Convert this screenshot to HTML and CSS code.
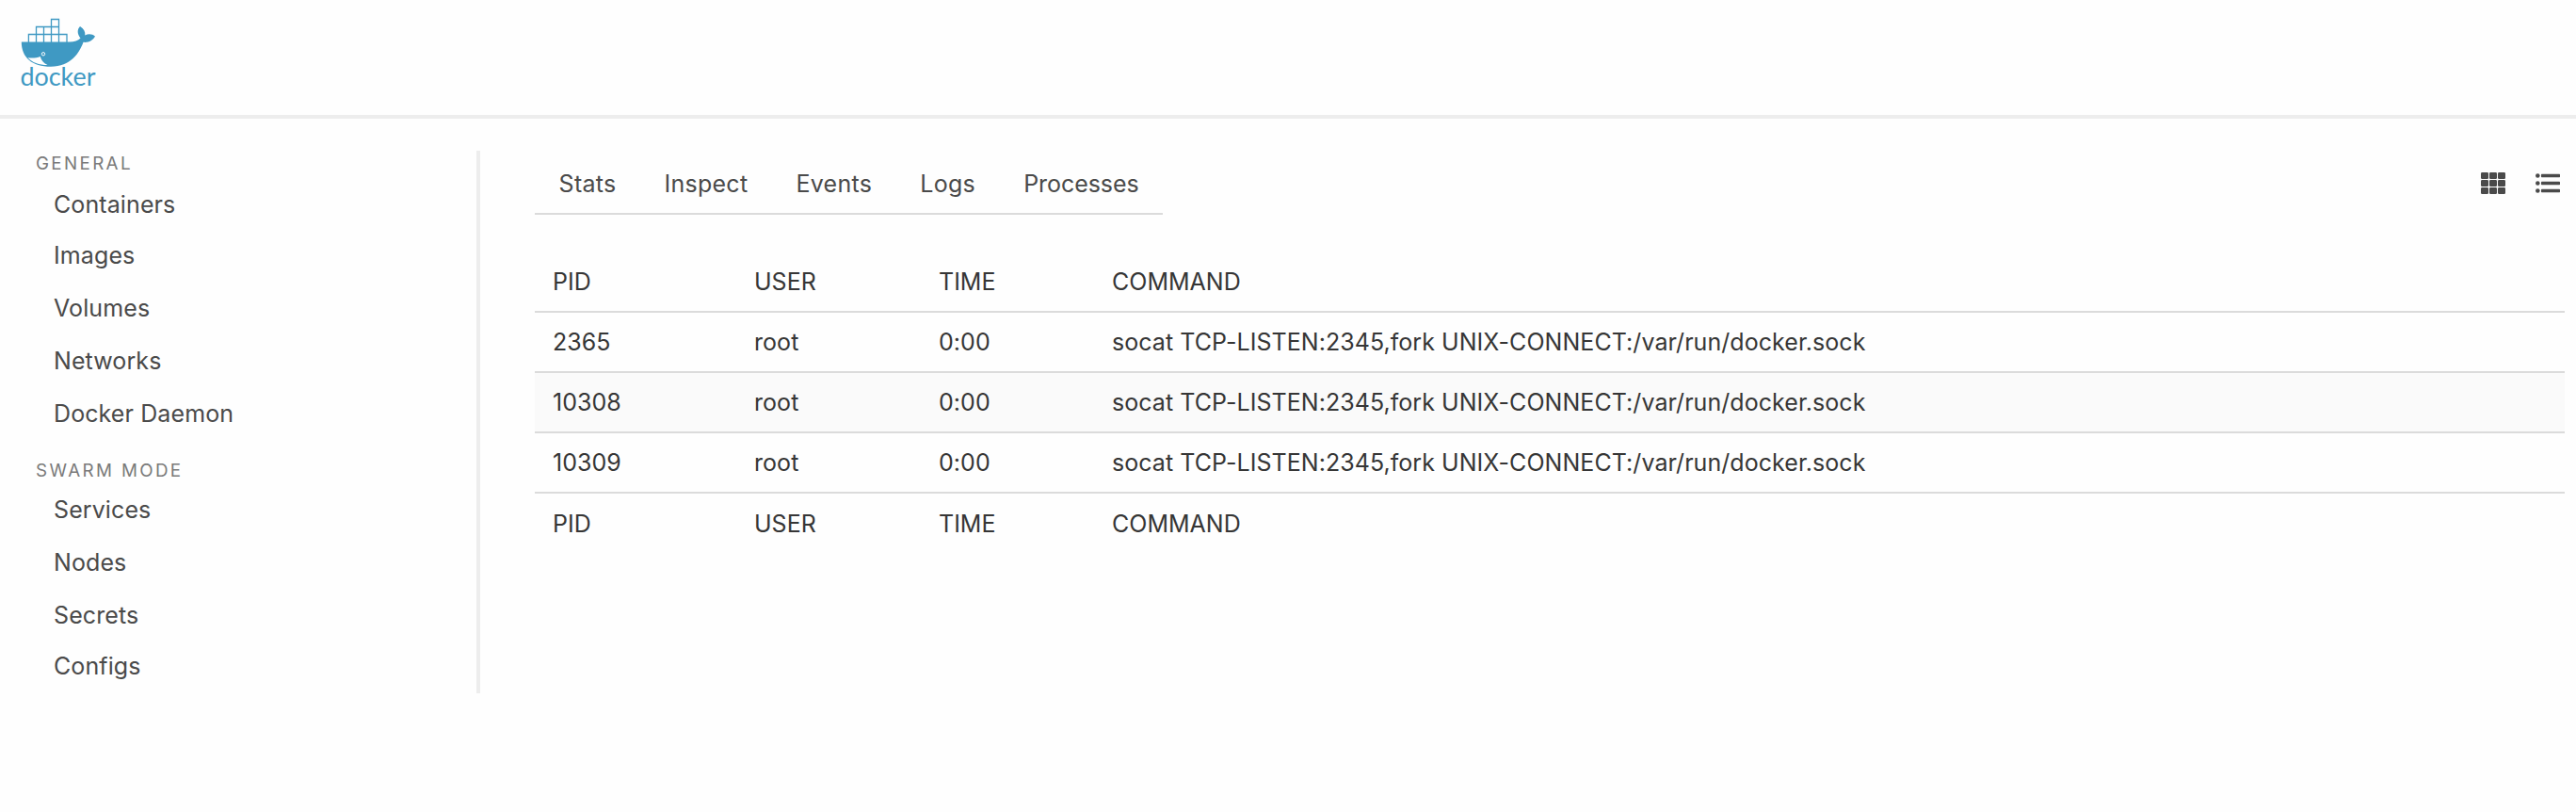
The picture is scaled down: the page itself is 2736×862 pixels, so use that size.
FILE: index.html
```
<!DOCTYPE html>
<html lang="en">
<head>
<meta charset="utf-8">
<title>Docker - Processes</title>
<link rel="stylesheet" href="styles.css">
</head>
<body>
<header class="navbar">
  <svg class="logo" viewBox="0 0 84 76" role="img" aria-label="docker">
    <path class="logo-boxes" d="M8.400 26V17.500H49V26M16.500 26V9.500H40.500V26M32.500 26V1.500H40.500V17.500M16.500 17.500H40.500M24.500 9.500V26"/>
    <path class="logo-fill" d="M.8 25.500H52C57 25.500 61 24 63.500 21.500C60.200 17.500 59.500 12.500 63 9C67 11.500 68.800 14.500 68.300 18.500C72 16.500 76 17 79 19.500C76.500 24 72 26.500 66.500 25.800C62.500 37 53 51.800 32 51.800C12 51.800 .8 42 .8 25.500Z"/>
    <path class="logo-belly" d="M7.500 42.200C12 43 17 42.500 20.800 41C21.500 44.500 24 48 28.500 50C19.500 50 12 47.300 7.500 42.200Z"/>
    <circle class="logo-eye" cx="24" cy="38.300" r="1.700"/>
    <text class="logo-text" x="-.5" y="71.500" textLength="80" lengthAdjust="spacingAndGlyphs">docker</text>
  </svg>
</header>
<div class="layout">
  <aside class="menu">
    <p class="menu-label">General</p>
    <ul class="menu-list">
      <li class="tight"><a>Containers</a></li>
      <li><a>Images</a></li>
      <li><a>Volumes</a></li>
      <li><a>Networks</a></li>
      <li><a>Docker Daemon</a></li>
    </ul>
    <p class="menu-label swarm-label">Swarm Mode</p>
    <ul class="menu-list">
      <li><a>Services</a></li>
      <li><a>Nodes</a></li>
      <li class="tight"><a>Secrets</a></li>
      <li><a>Configs</a></li>
    </ul>
  </aside>
  <main class="content">
    <div class="toolbar">
      <nav class="tabs"><a>Stats</a><a>Inspect</a><a>Events</a><a>Logs</a><a>Processes</a></nav>
      <div class="view-icons">
        <svg class="icon" viewBox="0 0 26 24" aria-label="Grid view">
          <rect x="0" y="0" width="8" height="7" rx="1.200"/><rect x="9" y="0" width="8" height="7" rx="1.200"/><rect x="18" y="0" width="8" height="7" rx="1.200"/>
          <rect x="0" y="8" width="8" height="7" rx="1.200"/><rect x="9" y="8" width="8" height="7" rx="1.200"/><rect x="18" y="8" width="8" height="7" rx="1.200"/>
          <rect x="0" y="16" width="8" height="7" rx="1.200"/><rect x="9" y="16" width="8" height="7" rx="1.200"/><rect x="18" y="16" width="8" height="7" rx="1.200"/>
        </svg>
        <svg class="icon" viewBox="0 0 26 24" aria-label="List view">
          <circle cx="2.300" cy="3.500" r="2.300"/><circle cx="2.300" cy="11.500" r="2.300"/><circle cx="2.300" cy="19.500" r="2.300"/>
          <rect x="6" y="1.700" width="20" height="3.500" rx=".6"/><rect x="6" y="9.700" width="20" height="3.500" rx=".6"/><rect x="6" y="17.700" width="20" height="3.500" rx=".6"/>
        </svg>
      </div>
    </div>
    <table class="table">
      <colgroup><col class="col-pid"><col class="col-user"><col class="col-time"><col></colgroup>
      <thead><tr><th>PID</th><th>USER</th><th>TIME</th><th>COMMAND</th></tr></thead>
      <tbody>
        <tr><td>2365</td><td>root</td><td>0:00</td><td>socat TCP-LISTEN:2345,fork UNIX-CONNECT:/var/run/docker.sock</td></tr>
        <tr><td>10308</td><td>root</td><td>0:00</td><td>socat TCP-LISTEN:2345,fork UNIX-CONNECT:/var/run/docker.sock</td></tr>
        <tr><td>10309</td><td>root</td><td>0:00</td><td>socat TCP-LISTEN:2345,fork UNIX-CONNECT:/var/run/docker.sock</td></tr>
      </tbody>
      <tfoot><tr><th>PID</th><th>USER</th><th>TIME</th><th>COMMAND</th></tr></tfoot>
    </table>
  </main>
</div>
</body>
</html>
```
FILE: styles.css
```
* { box-sizing: border-box; }
body {
  margin: 0;
  background: #fefefe;
  color: #363636;
  font-family: Inter, "Liberation Sans", sans-serif;
  font-size: 25px;
}
.navbar {
  height: 126px;
  padding: 19px 22px;
  border-bottom: 4px solid #ededed;
}
.logo { display: block; width: 84px; height: 76px; overflow: visible; }
.logo-boxes { fill: none; stroke: #3f99c3; stroke-width: 1.3; }
.logo-fill { fill: #3f99c3; }
.logo-belly { fill: #fefefe; }
.logo-eye { fill: none; stroke: #fefefe; stroke-width: 1; }
.logo-text {
  fill: #3f99c3;
  font-family: Lato, sans-serif;
  font-size: 26px;
}
.layout { display: flex; padding: 34px 12px 0 0; }
.menu {
  width: 510px;
  height: 576px;
  padding: 0 38px;
  border-right: 4px solid #ededed;
  flex: none;
}
.menu-label {
  margin: 0;
  height: 29px;
  padding-top: 2px;
  line-height: 24px;
  font-size: 18.8px;
  letter-spacing: 2.35px;
  color: #7a7a7a;
  text-transform: uppercase;
}
.swarm-label { height: 27px; margin-top: 19px; }
.menu-list { list-style: none; margin: 0; padding: 0 0 0 19px; }
.menu-list li {
  height: 56px;
  line-height: 56px;
  letter-spacing: .1px;
  color: #4a4a4a;
}
.menu-list .tight { height: 54px; }
.content { flex: 1; margin-left: 58px; }
.toolbar { display: flex; justify-content: space-between; }
.tabs {
  display: flex;
  height: 68px;
  border-bottom: 2px solid #dbdbdb;
  color: #4a4a4a;
}
.tabs a { padding: 0 25.6px; line-height: 70px; letter-spacing: .25px; }
.tabs a:last-child { letter-spacing: -.05px; }
.view-icons { display: flex; gap: 32px; padding: 23px 5px 0 0; }
.icon { width: 26px; height: 24px; fill: #4a4a4a; }
.table { width: 100%; margin-top: 40px; border-spacing: 0; table-layout: fixed; }
.col-pid { width: 214px; }
.col-user { width: 196px; }
.col-time { width: 184px; }
.table th, .table td {
  height: 64px;
  padding: 0 19px;
  border-bottom: 2px solid #dbdbdb;
  text-align: left;
  font-weight: 400;
}
.table td { letter-spacing: .05px; }
.table tfoot th { border-bottom: 0; }
.table tbody tr:nth-child(even) { background: #fafafa; }
```
